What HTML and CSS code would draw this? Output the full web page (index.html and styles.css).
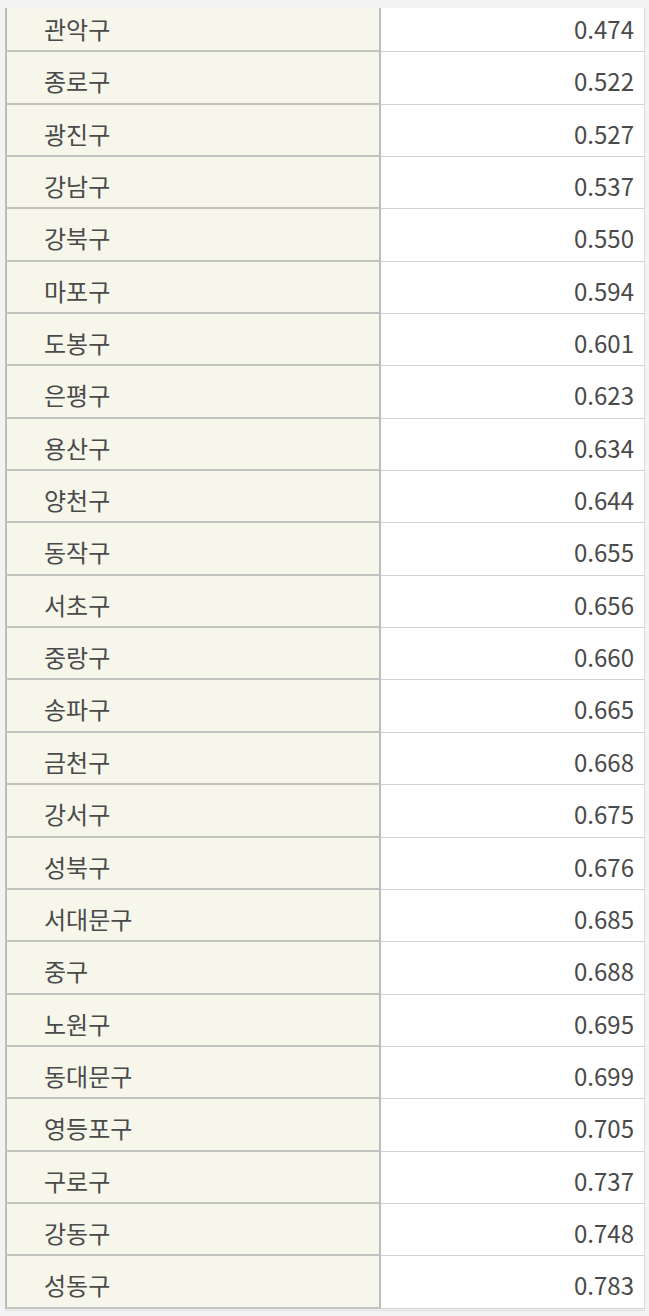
FILE: index.html
```html
<!DOCTYPE html>
<html lang="ko">
<head>
    <meta charset="UTF-8">
    <meta name="viewport" content="width=device-width, initial-scale=1.0">
    <title>구별 지수</title>
    <link rel="stylesheet" href="styles.css">
</head>
<body>
    <div class="sheet">
        <table class="ranking">
            <tbody>
                <tr><td class="name">관악구</td><td class="value">0.474</td></tr>
                <tr><td class="name">종로구</td><td class="value">0.522</td></tr>
                <tr><td class="name">광진구</td><td class="value">0.527</td></tr>
                <tr><td class="name">강남구</td><td class="value">0.537</td></tr>
                <tr><td class="name">강북구</td><td class="value">0.550</td></tr>
                <tr><td class="name">마포구</td><td class="value">0.594</td></tr>
                <tr><td class="name">도봉구</td><td class="value">0.601</td></tr>
                <tr><td class="name">은평구</td><td class="value">0.623</td></tr>
                <tr><td class="name">용산구</td><td class="value">0.634</td></tr>
                <tr><td class="name">양천구</td><td class="value">0.644</td></tr>
                <tr><td class="name">동작구</td><td class="value">0.655</td></tr>
                <tr><td class="name">서초구</td><td class="value">0.656</td></tr>
                <tr><td class="name">중랑구</td><td class="value">0.660</td></tr>
                <tr><td class="name">송파구</td><td class="value">0.665</td></tr>
                <tr><td class="name">금천구</td><td class="value">0.668</td></tr>
                <tr><td class="name">강서구</td><td class="value">0.675</td></tr>
                <tr><td class="name">성북구</td><td class="value">0.676</td></tr>
                <tr><td class="name">서대문구</td><td class="value">0.685</td></tr>
                <tr><td class="name">중구</td><td class="value">0.688</td></tr>
                <tr><td class="name">노원구</td><td class="value">0.695</td></tr>
                <tr><td class="name">동대문구</td><td class="value">0.699</td></tr>
                <tr><td class="name">영등포구</td><td class="value">0.705</td></tr>
                <tr><td class="name">구로구</td><td class="value">0.737</td></tr>
                <tr><td class="name">강동구</td><td class="value">0.748</td></tr>
                <tr><td class="name">성동구</td><td class="value">0.783</td></tr>
            </tbody>
        </table>
    </div>
</body>
</html>
```

FILE: styles.css
```css
body {
    background-color: #f3f3f3;
    color: #4a4a4a;
    font-family: "Noto Sans CJK KR", "Noto Sans", sans-serif;
    margin: 0;
    padding: 8px 0 0 5px;
}

.sheet {
    width: 640px;
    border-bottom: 1px solid #e0e0e0;
    padding-bottom: 1px;
}

.ranking {
    width: 640px;
    border-collapse: separate;
    border-spacing: 0;
    table-layout: fixed;
    font-size: 24px;
}

.ranking td {
    vertical-align: top;
    line-height: 34px;
    padding-top: 12px;
    padding-bottom: 4.35px;
    white-space: nowrap;
}

.ranking tr:first-child td {
    padding-top: 4px;
}

.name {
    width: 334px;
    background-color: #f6f6ea;
    border-left: 2px solid #bcbcbc;
    border-right: 2px solid #bcbcbc;
    border-bottom: 2px solid #c2c2c0;
    padding-left: 37px;
}

.value {
    background-color: #fff;
    border-right: 1px solid #d9d9d9;
    border-bottom: 1px solid #d2d2d2;
    padding-right: 10px;
    text-align: right;
}
```
